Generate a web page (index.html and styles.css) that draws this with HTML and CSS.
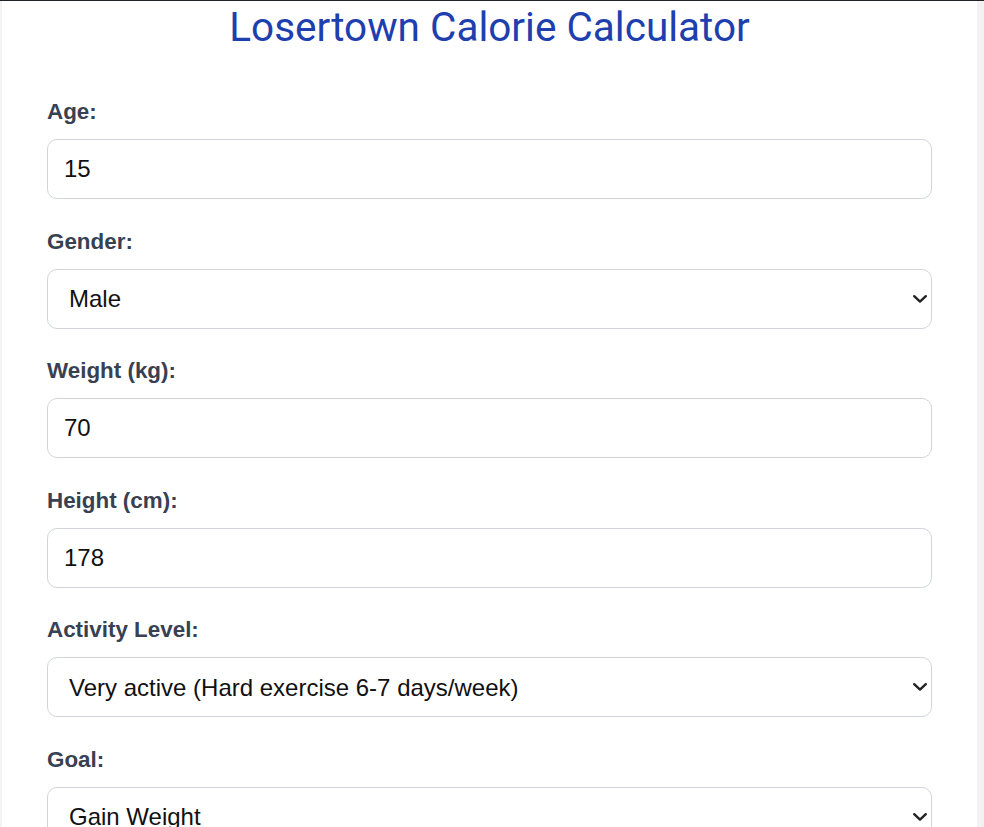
FILE: index.html
```html
<!DOCTYPE html>
<html lang="en">
<head>
<meta charset="utf-8">
<title>Losertown Calorie Calculator</title>
<link rel="stylesheet" href="styles.css">
</head>
<body>
<main class="container">
  <h1 class="title">Losertown Calorie Calculator</h1>
  <form class="calc-form">
    <div class="field">
      <label class="field-label" for="age">Age:</label>
      <input class="control" id="age" type="number" value="15">
    </div>
    <div class="field">
      <label class="field-label" for="gender">Gender:</label>
      <div class="select-wrap">
        <select class="control select" id="gender">
          <option selected>Male</option>
          <option>Female</option>
        </select>
        <svg class="chevron" viewBox="0 0 14 8" width="14" height="8" aria-hidden="true"><path d="M1.2 1.2 L7 6.6 L12.8 1.2" fill="none" stroke="#222" stroke-width="2.4" stroke-linecap="round" stroke-linejoin="round"/></svg>
      </div>
    </div>
    <div class="field">
      <label class="field-label" for="weight">Weight (kg):</label>
      <input class="control" id="weight" type="number" value="70">
    </div>
    <div class="field">
      <label class="field-label" for="height">Height (cm):</label>
      <input class="control" id="height" type="number" value="178">
    </div>
    <div class="field">
      <label class="field-label" for="activity">Activity Level:</label>
      <div class="select-wrap">
        <select class="control select" id="activity">
          <option>Sedentary (Little or no exercise)</option>
          <option>Lightly active (Light exercise 1-3 days/week)</option>
          <option>Moderately active (Moderate exercise 3-5 days/week)</option>
          <option selected>Very active (Hard exercise 6-7 days/week)</option>
          <option>Extra active (Very hard exercise &amp; physical job)</option>
        </select>
        <svg class="chevron" viewBox="0 0 14 8" width="14" height="8" aria-hidden="true"><path d="M1.2 1.2 L7 6.6 L12.8 1.2" fill="none" stroke="#222" stroke-width="2.4" stroke-linecap="round" stroke-linejoin="round"/></svg>
      </div>
    </div>
    <div class="field">
      <label class="field-label" for="goal">Goal:</label>
      <div class="select-wrap">
        <select class="control select" id="goal">
          <option>Lose Weight</option>
          <option>Maintain Weight</option>
          <option selected>Gain Weight</option>
        </select>
        <svg class="chevron" viewBox="0 0 14 8" width="14" height="8" aria-hidden="true"><path d="M1.2 1.2 L7 6.6 L12.8 1.2" fill="none" stroke="#222" stroke-width="2.4" stroke-linecap="round" stroke-linejoin="round"/></svg>
      </div>
    </div>
  </form>
</main>
</body>
</html>
```

FILE: styles.css
```css
html, body {
  margin: 0;
  padding: 0;
}

body {
  background: #f3f3f3;
  border-top: 1px solid #202326;
  font-family: "Liberation Sans", Arial, sans-serif;
  height: 826px;
  overflow: hidden;
}

.container {
  margin-left: 2px;
  width: 975px;
  min-height: 900px;
  box-sizing: border-box;
  background: #ffffff;
  padding: 2px 45px 0;
}

.title {
  margin: 0 0 48px;
  font-family: Roboto, "Liberation Sans", sans-serif;
  font-weight: 400;
  font-size: 40.5px;
  line-height: 48px;
  color: #1e40af;
  text-align: center;
}

.calc-form {
  display: flex;
  flex-direction: column;
}

.field {
  display: flex;
  flex-direction: column;
  margin-bottom: 29.6px;
}

.field-label {
  font-size: 22.4px;
  font-weight: 700;
  color: #374151;
  margin-bottom: 14px;
}

.control {
  box-sizing: border-box;
  width: 100%;
  height: 60px;
  padding: 0 16px;
  border: 1px solid #d1d5db;
  border-radius: 10px;
  background: #ffffff;
  font-family: "Liberation Sans", Arial, sans-serif;
  font-size: 24px;
  color: #111111;
  outline: none;
}

.control[type="number"]::-webkit-inner-spin-button,
.control[type="number"]::-webkit-outer-spin-button {
  -webkit-appearance: none;
  margin: 0;
}

.select-wrap {
  position: relative;
}

.select {
  -webkit-appearance: none;
  appearance: none;
  padding-left: 21px;
  padding-right: 40px;
}

.chevron {
  position: absolute;
  right: 5px;
  top: 26px;
  pointer-events: none;
}
```
